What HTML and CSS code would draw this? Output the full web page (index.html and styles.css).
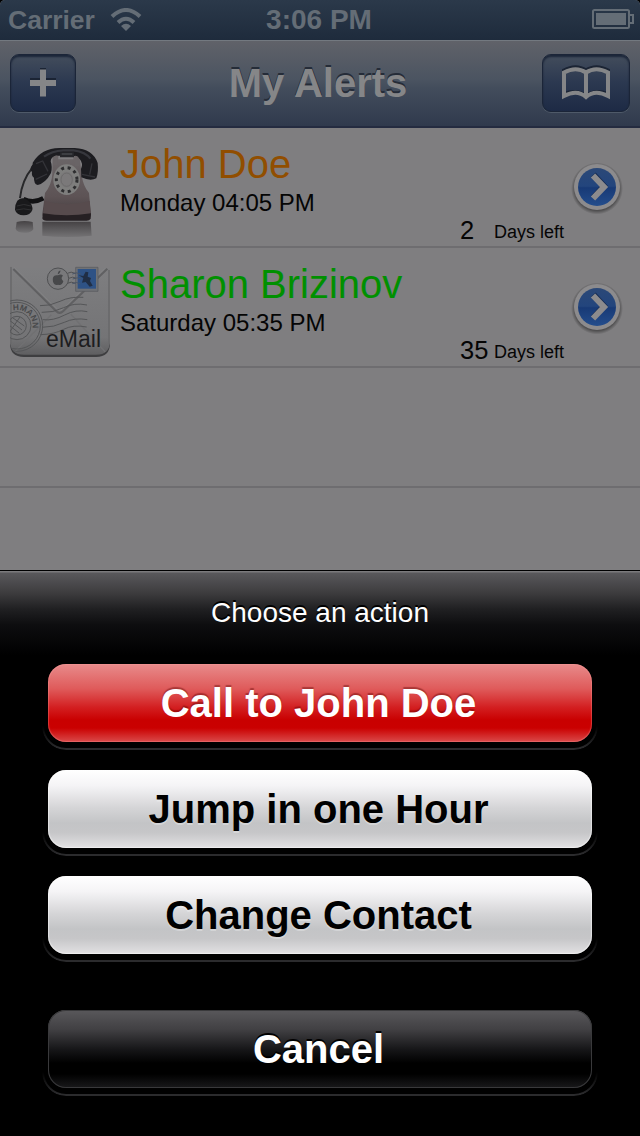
FILE: index.html
```html
<!DOCTYPE html>
<html lang="en">
<head>
  <meta charset="utf-8" />
  <meta name="viewport" content="width=device-width,initial-scale=1" />
  <title>My Alerts</title>
  <link rel="stylesheet" href="styles.css">
</head>
<body>
  <div class="phone">
    <header class="status">
      <div class="carrier">
        <span>Carrier</span>
        <svg class="wifi" width="32" height="24" viewBox="0 0 32 24">
          <path d="M2 8.500Q16-4.500 30 8.500M8 14.500Q16 7 24 14.500" fill="none" stroke="currentColor" stroke-width="4"/>
          <path d="M11 18Q16 13.500 21 18L16 23z" fill="currentColor"/>
        </svg>
      </div>
      <span class="time">3:06 PM</span>
      <svg class="battery" width="42" height="20" viewBox="0 0 42 20">
        <rect x="1" y="1" width="36" height="18" rx="1.500" fill="none" stroke="currentColor" stroke-width="2"/>
        <rect x="4" y="4" width="30" height="12" fill="currentColor"/>
        <path d="M38 6h3v8h-3" fill="none" stroke="currentColor" stroke-width="2"/>
      </svg>
    </header>

    <nav class="navbar">
      <button class="nav-btn add" aria-label="Add">
        <svg width="26" height="29" viewBox="0 0 26 29">
          <path d="M10 0h6v10h10v6H16v11h-6V16H0v-6h10z" fill="#1b2434"/>
          <path d="M10 1.500h6V12h10v6H16v10.500h-6V18H0v-6h10z" fill="#858688"/>
        </svg>
      </button>
      <h1>My Alerts</h1>
      <button class="nav-btn book" aria-label="Contacts">
        <svg width="50" height="36" viewBox="0 0 50 36">
          <g fill="none" stroke-width="4" stroke-linejoin="miter">
            <path d="M3 29V5.500Q15-1 25 5.500Q35-1 47 5.500V29Q34 24 25 31Q16 24 3 29zM25 5.500V30" stroke="#1b2434"/>
            <path d="M3 31V7.500Q15 1 25 7.500Q35 1 47 7.500V31Q34 24 25 32Q16 24 3 31zM25 7.500V32" stroke="#858688"/>
          </g>
        </svg>
      </button>
    </nav>

    <ul class="alerts">
      <li class="alert">
        <svg class="thumb" width="120" height="116" viewBox="0 0 360 348">
          <defs>
            <linearGradient id="body" x1="0" y1="0" x2="0" y2="1">
              <stop offset="0" stop-color="#6c6769"/><stop offset=".65" stop-color="#5d5355"/><stop offset="1" stop-color="#40383b"/>
            </linearGradient>
            <linearGradient id="shade" x1="0" y1="0" x2="0" y2="1">
              <stop offset="0" stop-color="#454244"/><stop offset="1" stop-color="#747375"/>
            </linearGradient>
          </defs>
          <!-- reflection -->
          <path d="M127 275h145l3 42q-75 8-148 0z" fill="url(#shade)"/>
          <path d="M50 276q23-6 48 0l2 22q-8 12-26 10q-24 0-27-12z" fill="url(#shade)"/>
          <!-- cord -->
          <path d="M98 112Q66 150 60 204" fill="none" stroke="#28282a" stroke-width="6"/>
          <path d="M70 207Q100 222 130 205" fill="none" stroke="#111113" stroke-width="14"/>
          <path d="M52 212q16-14 33 0q14 12 12 28q-6 16-26 16q-22-1-26-17q-1-15 7-27z" fill="#19191b"/>
          <path d="M51 228q20-9 42 0M48 240q22-7 46 0" fill="none" stroke="#303032" stroke-width="3"/>
          <!-- base -->
          <path d="M158 82q0-9 9-9h8v15h45V74h9q10 0 10 10l6 52q5 34 22 53l6 64q-1 14-15 16H143q-15-1-16-16l8-64q20-25 22-57z" fill="url(#body)"/>
          <path d="M134 213q68 20 135 0l3 42q-70 13-143 0z" fill="#574b4d"/>
          <path d="M129 250q70 12 144 0l-1 16q-4 6-12 6H140q-12 0-13-7z" fill="#262023"/>
          <!-- handset -->
          <path d="M98 98Q124 55 178 54h46q55 3 69 45q3 27-4 46q-18 10-45-3l-1-25q8-16-4-30q-10-10-18-10h-54q-14 3-15 17q6 18 1 35q-16 30-40 36q-12-4-11-22q-8-4-6-17q-10-7 2-23z" fill="#1c1c20"/>
          <path d="M132 80Q155 63 190 61h31q36 5 50 25" fill="none" stroke="#36373d" stroke-width="7"/>
          <path d="M108 101l20-8l16 31M276 100l-7 34M107 148l34-16M246 133l39 8" fill="none" stroke="#333338" stroke-width="4"/>
          <path d="M180 67h42v15h-42z" fill="#25262a"/>
          <path d="M185 72h32" stroke="#55565b" stroke-width="3"/>
          <path d="M160 84q3-9 13-7v29h-14zM225 77q10 0 12 9v22h-12z" fill="#696466"/>
          <!-- dial -->
          <ellipse cx="200" cy="149" rx="40" ry="46" fill="#7e7e7d"/>
          <ellipse cx="200" cy="149" rx="31" ry="36" fill="none" stroke="#2e2e30" stroke-width="9" stroke-dasharray="9 11"/>
          <ellipse cx="200" cy="149" rx="21" ry="24" fill="#7b797a"/>
          <ellipse cx="200" cy="149" rx="17" ry="20" fill="none" stroke="#6c6b6b" stroke-width="3"/>
        </svg>
        <div class="info">
          <h2 class="name orange">John Doe</h2>
          <p class="when">Monday 04:05 PM</p>
        </div>
        <div class="left"><b>2</b><span>Days left</span></div>
        <svg class="more" width="54" height="54" viewBox="0 0 54 54"><use href="#disclosure"/></svg>
      </li>
      <li class="alert">
        <svg class="thumb" width="120" height="116" viewBox="0 0 360 348">
          <defs>
            <linearGradient id="env" x1="0" y1="0" x2="0" y2="1">
              <stop offset="0" stop-color="#7e7e80"/><stop offset=".8" stop-color="#747476"/><stop offset="1" stop-color="#5f5f61"/>
            </linearGradient>
            <clipPath id="envClip"><path d="M30 50h300v222q0 42-42 42H72q-42 0-42-42z"/></clipPath>
          </defs>
          <path d="M30 64h300v216q0 41-42 41H72q-42 0-42-41z" fill="#3e3e40"/>
          <path d="M30 54h300v218q0 42-42 42H72q-42 0-42-42z" fill="url(#env)"/>
          <g clip-path="url(#envClip)" fill="none">
            <path d="M33 50v232M327 60v222" stroke="#6a6a6c" stroke-width="5"/>
            <path d="M40 57l128 126q11 11 22 0L322 56" stroke="#606062" stroke-width="6"/>
            <path d="M42 51l130 126q8 8 16 0L314 55" stroke="#858587" stroke-width="2"/>
            <path d="M44 306L154 194M316 306L212 192" stroke="#707072" stroke-width="4"/>
            <g stroke="#555658" stroke-width="3">
              <path d="M120 167q29 2 60-13t70-12M125 187q34 2 66-14t70-8M128 209q32 4 66-14t68-10M126 232q36 0 67-15t69-8M121 254q42-1 70-16t69-7"/>
              <circle cx="51" cy="227" r="77"/><circle cx="51" cy="227" r="70"/><circle cx="51" cy="227" r="42"/><circle cx="51" cy="227" r="28"/>
              <path d="M30 212l36 28M28 226l30 24M39 204l34 24M60 201l-32 46"/>
            </g>
            <path id="stampArc" d="M4 227a47 47 0 0 1 94 0q0 16-8 28"/>
            <text class="postmark"><textPath href="#stampArc" startOffset="62">HMANN</textPath></text>
          </g>
          <circle cx="174" cy="86" r="32" fill="#79797b" stroke="#4f5052" stroke-width="3"/>
          <path d="M174 76q9-6 15 1q-9 7 1 17q-5 15-16 10q-10 4-15-9q-4-23 15-19zM173 73q0-9 8-12q1 9-8 12z" fill="#47484a"/>
          <path d="M202 70q11-7 24 0t22 0M206 85q12-7 24 0t22 0M202 100q12-7 24 0t22 0" fill="none" stroke="#505153" stroke-width="3"/>
          <path d="M227 52h67v72h-67z" fill="#6f7175" stroke="#56585c" stroke-width="2"/>
          <path d="M233 57h55v59h-55z" fill="#2e5285"/>
          <path d="M236 76l14 2l7-13l8 2l-2 13l10 4l-3 9l8 14l-9 3l-12-14l-11 2l4-14z" fill="#202e45"/>
          <path d="M217 72q12-7 25 0M218 87q14-7 27 0M217 101q13-7 24 0" fill="none" stroke="#495568" stroke-width="3"/>
          <text class="email" x="138" y="290" textLength="165" lengthAdjust="spacingAndGlyphs">eMail</text>
        </svg>
        <div class="info">
          <h2 class="name green">Sharon Brizinov</h2>
          <p class="when">Saturday 05:35 PM</p>
        </div>
        <div class="left"><b>35</b><span>Days left</span></div>
        <svg class="more" width="54" height="54" viewBox="0 0 54 54">
          <defs>
            <linearGradient id="blue" x1="0" y1="0" x2="0" y2="1">
              <stop offset="0" stop-color="#2b4877"/><stop offset=".48" stop-color="#23457d"/><stop offset=".52" stop-color="#183a76"/><stop offset="1" stop-color="#244d8c"/>
            </linearGradient>
            <radialGradient id="halo">
              <stop offset=".8" stop-color="#000" stop-opacity=".5"/><stop offset="1" stop-color="#000" stop-opacity="0"/>
            </radialGradient>
            <g id="disclosure">
              <circle cx="27" cy="28.500" r="26" fill="url(#halo)"/>
              <circle cx="27" cy="27" r="23" fill="#8c8b8d"/>
              <circle cx="27" cy="27" r="19" fill="url(#blue)"/>
              <path d="M23.500 14.500L34 26L23.500 37.500" fill="none" stroke="#172c52" stroke-width="6"/>
              <path d="M23 15.500L34 27L23 38.500" fill="none" stroke="#8c8b8d" stroke-width="6"/>
            </g>
          </defs>
          <use href="#disclosure"/>
        </svg>
      </li>
      <li class="alert empty"></li>
    </ul>

    <section class="sheet">
      <p class="sheet-title">Choose an action</p>
      <button class="action red">Call to John Doe</button>
      <button class="action white">Jump in one Hour</button>
      <button class="action white">Change Contact</button>
      <button class="action black">Cancel</button>
    </section>
  </div>
</body>
</html>
```
FILE: styles.css
```css
*{box-sizing:border-box;margin:0;padding:0;font-family:"Liberation Sans",Arial,sans-serif}
body{background:#000}
button{border:none;background:none}
svg{display:block;flex:none}
.phone{width:640px;height:1136px;display:flex;flex-direction:column;overflow:hidden;background:#7f7e80;border-radius:5px 5px 0 0}

/* status bar */
.status{height:40px;flex:none;display:grid;grid-template-columns:1fr auto 1fr;align-items:center;padding:0 8px 0 8px;background:linear-gradient(#2b394a,#1e2b3c);color:#646d76;font-weight:700}
.carrier{display:flex;align-items:center;gap:15px;font-size:26.5px;line-height:40px}
.time{font-size:28px;line-height:40px;margin-left:-2px}
.battery{justify-self:end;margin:-2px -2px 0 0}

/* navigation bar */
.navbar{height:88px;flex:none;display:flex;align-items:center;justify-content:space-between;padding:0 10px 2px;background:linear-gradient(#606269,#4b5461 45%,#434d5c 55%,#303a4d);border-top:1px solid #737980;border-bottom:2px solid #242b40}
.navbar h1{font-size:40px;line-height:50px;color:#858688;text-shadow:0 -2px 0 #252c38;margin-left:18px}
.nav-btn{height:58px;border-radius:9px;display:flex;align-items:center;justify-content:center;background:linear-gradient(#434d5c,#2b3850 50%,#1d2a45);border:1px solid #1b2538;box-shadow:inset 0 2px 2px #1b2538,0 1px 0 #4f5a69}
.add{width:66px}
.book{width:88px}

/* list */
.alerts{flex:1;list-style:none}
.alert{height:120px;display:flex;border-bottom:2px solid #6e6d70}
.thumb{margin-top:2px}
.info{width:340px;padding-top:13px}
.name{font-size:40px;line-height:46px;font-weight:400;white-space:nowrap}
.orange{color:#914e00}
.green{color:#009000}
.when{font-size:24px;line-height:28px;margin-top:2px;color:#050505}
.left{width:110px;display:flex;align-items:baseline;align-self:flex-end;line-height:30px;margin-bottom:-1px;color:#050505}
.left b{position:relative;top:1px;width:34px;font-size:25.5px;font-weight:400}
.left span{font-size:18px;white-space:nowrap}
.more{margin-top:32px}
.email{font-size:74px;fill:#1d1d1f}
.postmark{font-size:25px;font-weight:700;fill:#48494b;stroke:none}

/* action sheet */
.sheet{height:566px;flex:none;padding:24px 48px 0;display:flex;flex-direction:column;border-top:1px solid #000;background:linear-gradient(#7b7a7c 0 1px,#59585b 2px,#3d3c3e 22px,#202022 38px,#0d0d0f 54px,#000 84px)}
.sheet-title{height:69px;font-size:28px;line-height:35px;text-align:center;color:#fff;text-shadow:0 -2px 0 #000}
.action{position:relative;height:78px;margin-bottom:28px;padding-right:3px;border-radius:18px;font-size:40px;font-weight:700;line-height:78px}
.action::after{content:"";position:absolute;left:-6px;right:-6px;top:0;bottom:-8px;border:2px solid #2b2b2d;border-radius:24px;-webkit-mask:linear-gradient(transparent 62px,#000 84px);mask:linear-gradient(transparent 62px,#000 84px)}
.red{color:#fff;text-shadow:0 -2px 1px rgba(90,0,0,.4);background:linear-gradient(#e88b8b,#df5a5a 32%,#d31e20 56%,#c90000 72%,#ca0000 82%,#da4a4a);box-shadow:inset 0 0 1px 1px rgba(255,160,160,.35)}
.white{color:#000;text-shadow:0 2px 0 rgba(255,255,255,.3);background:linear-gradient(#fff,#f5f4f6 20%,#d5d5d7 48%,#c3c4c6 68%,#c6c6c8 80%,#e2e1e3);box-shadow:inset 0 0 1px 1px rgba(255,255,255,.5)}
.black{color:#fff;margin-top:28px;text-shadow:0 -2px 0 #000;background:linear-gradient(#59585b,#414043 25%,#171719 50%,#000 68%,#000 82%,#19191b);box-shadow:inset 0 0 0 1px #39393b}
```
